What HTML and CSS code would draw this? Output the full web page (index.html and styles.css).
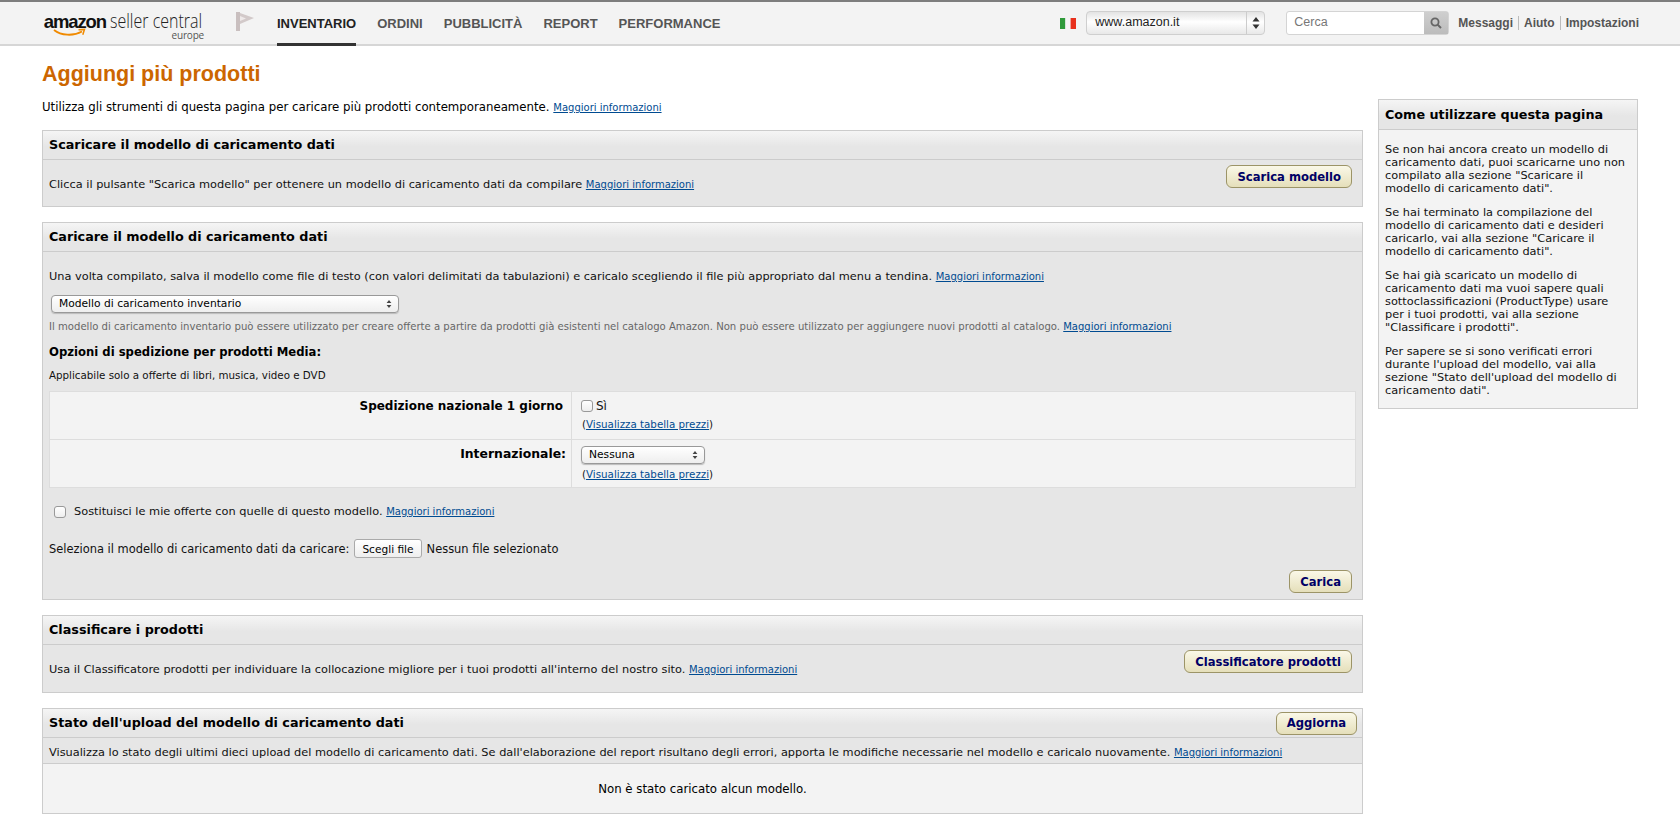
FILE: index.html
```html
<!DOCTYPE html>
<html lang="it">
<head>
<meta charset="utf-8">
<title>Aggiungi più prodotti</title>
<link rel="stylesheet" href="styles.css">
</head>
<body>
<header class="topbar">
  <a class="logo" href="#">
    <span class="logo-row"><span class="logo-amazon">amazon</span><span class="logo-seller"><span class="logo-seller-text">seller central</span></span></span>
    <span class="logo-europe">europe</span>
    <svg class="logo-smile" width="36" height="10" viewBox="0 0 36 10"><path d="M1 2C8 7.5 20 8.5 29 3.5" fill="none" stroke="#f08a00" stroke-width="1.8"/><path d="M25.5 1.8L31.5 1.4L29.8 6.8" fill="none" stroke="#f08a00" stroke-width="1.5"/></svg>
  </a>
  <svg class="flag" width="18" height="19" viewBox="0 0 18 19"><path d="M0 0H4V19H0Z" fill="#c9bfbf"/><path d="M4 1L18 6L4 12Z" fill="#d2c9c9"/><path d="M4 4L10 6.4L4 9Z" fill="#eee9e9"/></svg>
  <nav class="nav">
    <a class="nav-item active" href="#">INVENTARIO</a>
    <a class="nav-item" href="#">ORDINI</a>
    <a class="nav-item" href="#">PUBBLICITÀ</a>
    <a class="nav-item" href="#">REPORT</a>
    <a class="nav-item" href="#">PERFORMANCE</a>
  </nav>
  <div class="top-right">
    <svg class="it-flag" width="16" height="11" viewBox="0 0 16 11"><rect width="5.4" height="11" fill="#2f9a3a"/><rect x="5.4" width="5.2" height="11" fill="#f4f4f4"/><rect x="10.6" width="5.4" height="11" fill="#e8301c"/></svg>
    <div class="market">
      <span class="market-name">www.amazon.it</span>
      <span class="market-arrow"><svg width="8" height="12" viewBox="0 0 8 12"><path d="M4 0L7.5 4.6H.5ZM4 12L.5 7.4H7.5Z" fill="#333"/></svg></span>
    </div>
    <div class="search">
      <span class="search-input">Cerca</span>
      <span class="search-btn"><svg width="12" height="12" viewBox="0 0 12 12"><circle cx="5" cy="5" r="3.6" fill="none" stroke="#666" stroke-width="1.8"/><path d="M7.6 7.6L11 11" stroke="#666" stroke-width="2"/></svg></span>
    </div>
    <div class="top-links">
      <a href="#">Messaggi</a><a href="#">Aiuto</a><a href="#">Impostazioni</a>
    </div>
  </div>
</header>

<div class="page">
  <main class="main">
    <h1 class="title">Aggiungi più prodotti</h1>
    <p class="intro">Utilizza gli strumenti di questa pagina per caricare più prodotti contemporaneamente. <a class="more" href="#">Maggiori informazioni</a></p>

    <section class="panel">
      <div class="panel-head"><h2>Scaricare il modello di caricamento dati</h2></div>
      <div class="panel-body row-body row-download">
        <p>Clicca il pulsante "Scarica modello" per ottenere un modello di caricamento dati da compilare <a class="more" href="#">Maggiori informazioni</a></p>
        <button class="btn">Scarica modello</button>
      </div>
    </section>

    <section class="panel">
      <div class="panel-head"><h2>Caricare il modello di caricamento dati</h2></div>
      <div class="panel-body upload">
        <p class="upload-lead">Una volta compilato, salva il modello come file di testo (con valori delimitati da tabulazioni) e caricalo scegliendo il file più appropriato dal menu a tendina. <a class="more" href="#">Maggiori informazioni</a></p>
        <div class="select select-wide"><span>Modello di caricamento inventario</span><svg width="6" height="10" viewBox="0 0 6 10"><path d="M3 1L5.4 4H.6ZM3 9L.6 6H5.4Z" fill="#444"/></svg></div>
        <p class="hint">Il modello di caricamento inventario può essere utilizzato per creare offerte a partire da prodotti già esistenti nel catalogo Amazon. Non può essere utilizzato per aggiungere nuovi prodotti al catalogo. <a class="more" href="#">Maggiori informazioni</a></p>
        <h3 class="sub">Opzioni di spedizione per prodotti Media:</h3>
        <p class="applies">Applicabile solo a offerte di libri, musica, video e DVD</p>
        <div class="opts">
          <div class="opt opt-one">
            <div class="opt-label">Spedizione nazionale 1 giorno</div>
            <div class="opt-value">
              <div class="yes"><span class="check check-small"></span><span class="yes-text">Sì</span></div>
              <p class="price">(<a class="price-link" href="#">Visualizza tabella prezzi</a>)</p>
            </div>
          </div>
          <div class="opt opt-two">
            <div class="opt-label opt-label-intl">Internazionale:</div>
            <div class="opt-value">
              <div class="select select-narrow"><span>Nessuna</span><svg width="6" height="10" viewBox="0 0 6 10"><path d="M3 1L5.4 4H.6ZM3 9L.6 6H5.4Z" fill="#444"/></svg></div>
              <p class="price">(<a class="price-link" href="#">Visualizza tabella prezzi</a>)</p>
            </div>
          </div>
        </div>
        <div class="replace"><span class="check"></span><span>Sostituisci le mie offerte con quelle di questo modello. <a class="more" href="#">Maggiori informazioni</a></span></div>
        <div class="file-row"><span>Seleziona il modello di caricamento dati da caricare:</span><span class="file-btn">Scegli file</span><span>Nessun file selezionato</span></div>
        <div class="upload-foot"><button class="btn">Carica</button></div>
      </div>
    </section>

    <section class="panel">
      <div class="panel-head"><h2>Classificare i prodotti</h2></div>
      <div class="panel-body row-body row-classify">
        <p>Usa il Classificatore prodotti per individuare la collocazione migliore per i tuoi prodotti all'interno del nostro sito. <a class="more" href="#">Maggiori informazioni</a></p>
        <button class="btn">Classificatore prodotti</button>
      </div>
    </section>

    <section class="panel panel-last">
      <div class="panel-head panel-head-btn"><h2>Stato dell'upload del modello di caricamento dati</h2><button class="btn">Aggiorna</button></div>
      <div class="status-desc">Visualizza lo stato degli ultimi dieci upload del modello di caricamento dati. Se dall'elaborazione del report risultano degli errori, apporta le modifiche necessarie nel modello e caricalo nuovamente. <a class="more" href="#">Maggiori informazioni</a></div>
      <div class="status-empty">Non è stato caricato alcun modello.</div>
    </section>
  </main>

  <aside class="side">
    <div class="side-head"><h2>Come utilizzare questa pagina</h2></div>
    <div class="side-body">
      <p>Se non hai ancora creato un modello di caricamento dati, puoi scaricarne uno non compilato alla sezione "Scaricare il modello di caricamento dati".</p>
      <p>Se hai terminato la compilazione del modello di caricamento dati e desideri caricarlo, vai alla sezione "Caricare il modello di caricamento dati".</p>
      <p>Se hai già scaricato un modello di caricamento dati ma vuoi sapere quali sottoclassificazioni (ProductType) usare per i tuoi prodotti, vai alla sezione "Classificare i prodotti".</p>
      <p>Per sapere se si sono verificati errori durante l'upload del modello, vai alla sezione "Stato dell'upload del modello di caricamento dati".</p>
    </div>
  </aside>
</div>
</body>
</html>
```

FILE: styles.css
```css
* { box-sizing: border-box; }
html, body { margin: 0; padding: 0; }
body { background: #fff; color: #111; font: 11.35px/14px "DejaVu Sans", Verdana, sans-serif; }
p, h1, h2, h3 { margin: 0; }
a { color: #004b91; }

/* top bar */
.topbar { height: 46px; display: flex; align-items: stretch; background: #f3f3f3; border-top: 2px solid #7d7d7d; border-bottom: 2px solid #d6d6d6; padding-left: 45px; font-family: "Liberation Sans", Arial, sans-serif; }
.logo { position: relative; width: 159px; flex: none; color: #111; text-decoration: none; display: flex; flex-direction: column; align-items: flex-end; padding-top: 11px; }
.logo-row { display: flex; align-items: baseline; gap: 4px; height: 16px; line-height: 16px; white-space: nowrap; }
.logo-amazon { font-size: 18.5px; font-weight: 700; letter-spacing: -1.1px; color: #111; }
.logo-seller { display: inline-block; width: 94px; }
.logo-seller-text { display: inline-block; font: 300 20px/16px "Open Sans", "Liberation Sans", sans-serif; color: #222; transform: scaleX(.8); transform-origin: left center; }
.logo-europe { margin-top: 1px; font: 10px/10px "Open Sans", "Liberation Sans", sans-serif; letter-spacing: -.2px; color: #555; }
.logo-smile { position: absolute; left: 8px; top: 26px; }
.flag { flex: none; margin: 10px 0 0 32px; }
.nav { display: flex; gap: 21px; margin-left: 23px; }
.nav-item { display: flex; align-items: center; height: 44px; padding-top: 2px; color: #555; font-size: 13px; font-weight: 700; text-decoration: none; border-bottom: 3px solid transparent; }
.nav-item.active { color: #222; border-bottom-color: #333; }
.top-right { margin-left: auto; display: flex; align-items: flex-start; padding-top: 9px; padding-right: 41px; }
.it-flag { margin: 7px 10px 0 0; }
.market { width: 179px; height: 24px; display: flex; border: 1px solid #cfcfcf; border-radius: 4px; background: linear-gradient(#e3e3e3, #fff 45%, #e8e8e8); font-size: 12.5px; line-height: 21px; color: #222; }
.market-name { flex: 1; padding-left: 8px; }
.market-arrow { width: 18px; display: flex; align-items: center; justify-content: center; border-left: 1px solid #ccc; }
.search { width: 163px; height: 24px; margin-left: 21px; display: flex; border: 1px solid #d4d4d4; border-radius: 3px; background: #fff; font-size: 12.5px; line-height: 21px; color: #777; }
.search-input { flex: 1; padding-left: 7px; }
.search-btn { width: 24px; display: flex; align-items: center; justify-content: center; background: linear-gradient(#cfcfcf, #bcbcbc); }
.top-links { display: flex; margin-left: 9px; padding-top: 5px; font-size: 12px; line-height: 14px; font-weight: 700; }
.top-links a { color: #555; text-decoration: none; padding: 0 5px; border-left: 1px solid #bbb; }
.top-links a:first-child { border-left: 0; padding-left: 0; }
.top-links a:last-child { padding-right: 0; }

/* layout */
.page { display: flex; align-items: flex-start; padding: 0 42px; gap: 15px; }
.main { width: 1321px; flex: none; }
.title { margin-top: 14px; font: 700 21.5px/28px "Liberation Sans", Arial, sans-serif; color: #cc6600; }
.intro { margin-top: 12px; font-size: 11.75px; line-height: 14px; color: #000; }
.more { font-size: 10px; }

/* panels */
.panel { margin-top: 15px; border: 1px solid #ccc; background: #e6e6e6; }
.panel-head { height: 29px; padding: 0 6px; display: flex; align-items: center; border-bottom: 1px solid #ccc; background: linear-gradient(#f5f5f5, #e6e6e6 55%); }
.panel-head h2, .side-head h2 { font-size: 12.75px; font-weight: 700; color: #000; }
.panel-head-btn { justify-content: space-between; padding-right: 5px; }
.panel-body { padding: 0 6px; }
.row-body { display: flex; justify-content: space-between; padding-right: 10px; }
.row-download { height: 46px; }
.row-download p { padding-top: 17px; }
.row-classify { height: 47px; }
.row-classify p { padding-top: 17px; }
.row-body .btn { margin-top: 5px; }

.btn { height: 23px; padding: 0 10px; border: 1px solid #9c9467; border-radius: 6px; background: linear-gradient(#faf8e8, #e5dfba); font: 700 11.6px/20px "DejaVu Sans", Verdana, sans-serif; color: #000066; white-space: nowrap; }

.upload { height: 347px; }
.upload-lead { padding-top: 17px; }
.select { position: relative; display: flex; align-items: center; justify-content: space-between; height: 19px; border: 1px solid #999; border-radius: 4px; background: linear-gradient(#fff, #eee); box-shadow: 0 1px 1px #bbb; padding: 0 6px 0 7px; color: #000; font-size: 10.7px; }
.select-wide { width: 348px; margin: 11px 0 0 2px; height: 18px; }
.select-narrow { width: 124px; margin: 0; height: 18px; }
.hint { margin-top: 7px; font-size: 10.1px; color: #666; white-space: nowrap; }
.sub { margin-top: 11px; font-size: 11.65px; line-height: 14px; font-weight: 700; color: #000; }
.applies { margin-top: 9px; font-size: 10.3px; }
.opts { margin-top: 9px; border: 1px solid #ddd; background: #f3f3f3; }
.opt { display: flex; }
.opt-one { height: 48px; border-bottom: 1px solid #ddd; }
.opt-two { height: 47px; }
.opt-label { width: 522px; flex: none; padding: 7px 8px 0 0; text-align: right; font-size: 12px; font-weight: 700; color: #000; border-right: 1px solid #ddd; }
.opt-label-intl { padding-right: 5px; font-size: 12.4px; }
.opt-value { padding: 7px 0 0 9px; }
.opt-two .opt-value { padding-top: 6px; }
.yes { display: flex; align-items: center; gap: 3px; height: 14px; font-size: 12px; }
.check { display: inline-block; width: 12px; height: 12px; flex: none; border: 1px solid #999; border-radius: 3px; background: linear-gradient(#fff, #eee); }
.price { margin: 3px 0 0 1px; font-size: 10.3px; line-height: 14px; }
.opt-one .price { margin-top: 4px; }
.price-link { font-size: 10.3px; }
.replace { display: flex; align-items: center; gap: 8px; margin: 16px 0 0 5px; }
.file-row { display: flex; align-items: center; gap: 5px; margin-top: 20px; font-size: 11.45px; }
.file-btn { height: 19px; padding: 0 7px; line-height: 19px; border: 1px solid #aaa; border-radius: 3px; background: linear-gradient(#fff, #eee); font-size: 10.6px; color: #000; }
.upload-foot { display: flex; justify-content: flex-end; padding: 12px 4px 0 0; }

.status-desc { height: 26px; padding: 0 6px; line-height: 28px; border-bottom: 1px solid #ccc; white-space: nowrap; }
.status-empty { height: 49px; display: flex; align-items: center; justify-content: center; background: #f3f3f3; color: #000; font-size: 11.75px; }

/* sidebar */
.side { width: 260px; flex: none; margin-top: 53px; border: 1px solid #ccc; background: #f3f3f3; }
.side-head { height: 30px; padding: 0 6px; display: flex; align-items: center; border-bottom: 1px solid #ccc; background: linear-gradient(#f5f5f5, #e6e6e6 55%); }
.side-body { padding: 13px 9px 0 6px; height: 278px; line-height: 13px; }
.side-body p { margin-bottom: 11px; }
```
